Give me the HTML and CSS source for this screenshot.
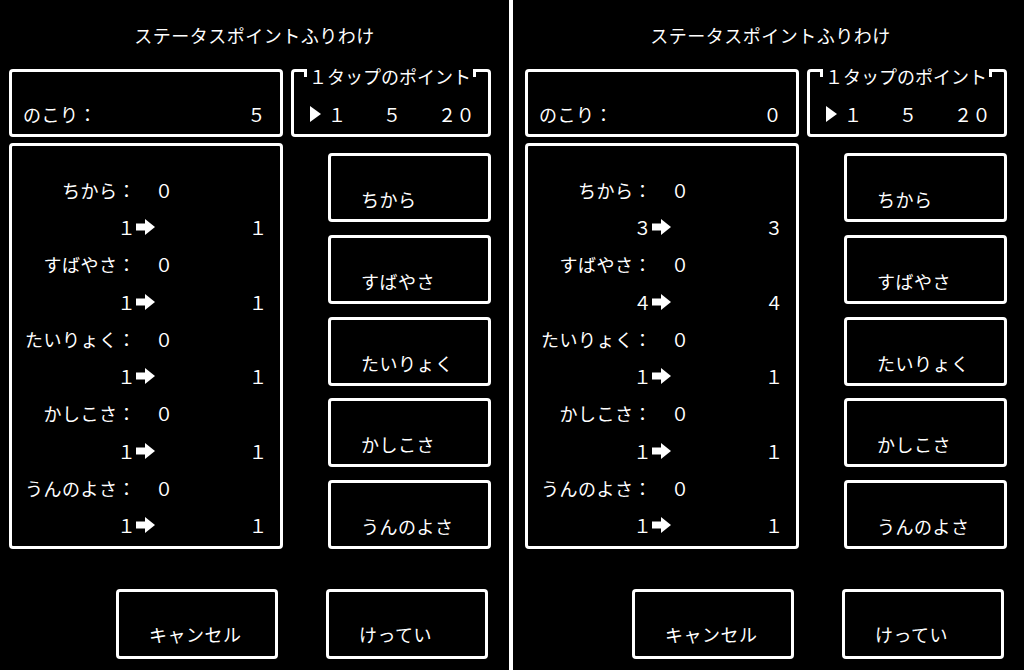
FILE: index.html
```html
<!DOCTYPE html>
<html lang="ja">
<head>
    <meta charset="UTF-8">
    <meta name="viewport" content="width=device-width, initial-scale=1.0">
    <title>ステータスポイントふりわけ</title>
    <link rel="stylesheet" href="styles.css">
</head>
<body>
    <div class="app">
        <!-- before allotting: 5 points left -->
        <section class="screen">
            <h1 class="title">ステータスポイントふりわけ</h1>
            <div class="top-row">
                <div class="box remain">
                    <span>のこり:</span>
                    <span>5</span>
                </div>
                <div class="box step">
                    <span class="legend">1タップのポイント</span>
                    <div class="step-option">
                        <span class="cursor-cell"><svg class="cursor" viewBox="0 0 12 16"><polygon points="0,0 11,8 0,16" fill="#fff"/></svg></span>
                        <span>1</span>
                    </div>
                    <div class="step-option">
                        <span class="cursor-cell"></span>
                        <span>5</span>
                    </div>
                    <div class="step-option">
                        <span class="cursor-cell"></span>
                        <span>20</span>
                    </div>
                </div>
            </div>
            <div class="main">
                <div class="box stats">
                    <div class="stat-row"><span class="stat-key">ちから:</span><span class="stat-base">0</span></div>
                    <div class="stat-row"><span class="stat-key">1</span><svg class="arrow" viewBox="0 0 20 16"><rect x="0" y="4.5" width="10" height="7" fill="#fff"/><polygon points="9,0 19,8 9,16" fill="#fff"/></svg><span class="stat-next">1</span></div>
                    <div class="stat-row"><span class="stat-key">すばやさ:</span><span class="stat-base">0</span></div>
                    <div class="stat-row"><span class="stat-key">1</span><svg class="arrow" viewBox="0 0 20 16"><rect x="0" y="4.5" width="10" height="7" fill="#fff"/><polygon points="9,0 19,8 9,16" fill="#fff"/></svg><span class="stat-next">1</span></div>
                    <div class="stat-row"><span class="stat-key">たいりょく:</span><span class="stat-base">0</span></div>
                    <div class="stat-row"><span class="stat-key">1</span><svg class="arrow" viewBox="0 0 20 16"><rect x="0" y="4.5" width="10" height="7" fill="#fff"/><polygon points="9,0 19,8 9,16" fill="#fff"/></svg><span class="stat-next">1</span></div>
                    <div class="stat-row"><span class="stat-key">かしこさ:</span><span class="stat-base">0</span></div>
                    <div class="stat-row"><span class="stat-key">1</span><svg class="arrow" viewBox="0 0 20 16"><rect x="0" y="4.5" width="10" height="7" fill="#fff"/><polygon points="9,0 19,8 9,16" fill="#fff"/></svg><span class="stat-next">1</span></div>
                    <div class="stat-row"><span class="stat-key">うんのよさ:</span><span class="stat-base">0</span></div>
                    <div class="stat-row"><span class="stat-key">1</span><svg class="arrow" viewBox="0 0 20 16"><rect x="0" y="4.5" width="10" height="7" fill="#fff"/><polygon points="9,0 19,8 9,16" fill="#fff"/></svg><span class="stat-next">1</span></div>
                </div>
                <div class="stat-buttons">
                    <div class="box btn">ちから</div>
                    <div class="box btn">すばやさ</div>
                    <div class="box btn">たいりょく</div>
                    <div class="box btn">かしこさ</div>
                    <div class="box btn">うんのよさ</div>
                </div>
            </div>
            <div class="actions">
                <div class="box btn action">キャンセル</div>
                <div class="box btn action">けってい</div>
            </div>
        </section>

        <div class="divider"></div>

        <!-- after allotting: all points used -->
        <section class="screen">
            <h1 class="title">ステータスポイントふりわけ</h1>
            <div class="top-row">
                <div class="box remain">
                    <span>のこり:</span>
                    <span>0</span>
                </div>
                <div class="box step">
                    <span class="legend">1タップのポイント</span>
                    <div class="step-option">
                        <span class="cursor-cell"><svg class="cursor" viewBox="0 0 12 16"><polygon points="0,0 11,8 0,16" fill="#fff"/></svg></span>
                        <span>1</span>
                    </div>
                    <div class="step-option">
                        <span class="cursor-cell"></span>
                        <span>5</span>
                    </div>
                    <div class="step-option">
                        <span class="cursor-cell"></span>
                        <span>20</span>
                    </div>
                </div>
            </div>
            <div class="main">
                <div class="box stats">
                    <div class="stat-row"><span class="stat-key">ちから:</span><span class="stat-base">0</span></div>
                    <div class="stat-row"><span class="stat-key">3</span><svg class="arrow" viewBox="0 0 20 16"><rect x="0" y="4.5" width="10" height="7" fill="#fff"/><polygon points="9,0 19,8 9,16" fill="#fff"/></svg><span class="stat-next">3</span></div>
                    <div class="stat-row"><span class="stat-key">すばやさ:</span><span class="stat-base">0</span></div>
                    <div class="stat-row"><span class="stat-key">4</span><svg class="arrow" viewBox="0 0 20 16"><rect x="0" y="4.5" width="10" height="7" fill="#fff"/><polygon points="9,0 19,8 9,16" fill="#fff"/></svg><span class="stat-next">4</span></div>
                    <div class="stat-row"><span class="stat-key">たいりょく:</span><span class="stat-base">0</span></div>
                    <div class="stat-row"><span class="stat-key">1</span><svg class="arrow" viewBox="0 0 20 16"><rect x="0" y="4.5" width="10" height="7" fill="#fff"/><polygon points="9,0 19,8 9,16" fill="#fff"/></svg><span class="stat-next">1</span></div>
                    <div class="stat-row"><span class="stat-key">かしこさ:</span><span class="stat-base">0</span></div>
                    <div class="stat-row"><span class="stat-key">1</span><svg class="arrow" viewBox="0 0 20 16"><rect x="0" y="4.5" width="10" height="7" fill="#fff"/><polygon points="9,0 19,8 9,16" fill="#fff"/></svg><span class="stat-next">1</span></div>
                    <div class="stat-row"><span class="stat-key">うんのよさ:</span><span class="stat-base">0</span></div>
                    <div class="stat-row"><span class="stat-key">1</span><svg class="arrow" viewBox="0 0 20 16"><rect x="0" y="4.5" width="10" height="7" fill="#fff"/><polygon points="9,0 19,8 9,16" fill="#fff"/></svg><span class="stat-next">1</span></div>
                </div>
                <div class="stat-buttons">
                    <div class="box btn">ちから</div>
                    <div class="box btn">すばやさ</div>
                    <div class="box btn">たいりょく</div>
                    <div class="box btn">かしこさ</div>
                    <div class="box btn">うんのよさ</div>
                </div>
            </div>
            <div class="actions">
                <div class="box btn action">キャンセル</div>
                <div class="box btn action">けってい</div>
            </div>
        </section>
    </div>
</body>
</html>
```

FILE: styles.css
```css
body {
    margin: 0;
    background-color: #000;
    color: #fff;
    font-family: "Noto Sans CJK JP", sans-serif;
    font-size: 18px;
    font-variant-east-asian: full-width;
    letter-spacing: 0.5px;
}
.app {
    display: flex;
    height: 670px;
    overflow: hidden;
}
.screen {
    width: 509px;
    flex: none;
}
.divider {
    width: 4px;
    margin-right: 3px;
    background-color: #fff;
    flex: none;
}
.title {
    margin: 0;
    height: 69px;
    font-size: 18px;
    font-weight: normal;
    line-height: 70px;
    text-align: center;
}

/* window frames */
.box {
    box-sizing: border-box;
    border: 3px solid #fff;
    border-radius: 4px;
}

.top-row {
    display: flex;
    gap: 8px;
    height: 68px;
    margin-left: 9px;
}
.remain {
    width: 274px;
    display: flex;
    justify-content: space-between;
    align-items: flex-end;
    padding: 0 14px 8px 11px;
    line-height: 24px;
}
.step {
    position: relative;
    width: 200px;
    display: flex;
    align-items: flex-end;
    padding: 0 0 8px 16px;
    line-height: 24px;
}
.legend {
    position: absolute;
    top: -5px;
    left: 10px;
    padding: 0 5px;
    background-color: #000;
    line-height: 18px;
    letter-spacing: 0;
}
.legend::before,
.legend::after {
    content: "";
    position: absolute;
    top: 2px;
    width: 3px;
    height: 8px;
    background-color: #fff;
}
.legend::before {
    left: 0;
}
.legend::after {
    right: 0;
}
.step-option {
    width: 55px;
    display: flex;
    align-items: center;
}
.cursor-cell {
    width: 18px;
    height: 16px;
}
.cursor {
    display: block;
    width: 12px;
    height: 16px;
}

.main {
    display: flex;
    margin: 6px 0 0 9px;
}
.stats {
    width: 274px;
    height: 406px;
    padding-top: 25px;
}
.stat-row {
    display: flex;
    align-items: center;
    height: 37.3px;
}
.stat-key {
    width: 124px;
    text-align: right;
}
.stat-base {
    width: 18px;
    margin-left: 19px;
    text-align: center;
}
.arrow {
    width: 20px;
    height: 16px;
    flex: none;
}
.stat-next {
    width: 18px;
    margin-left: 93px;
    text-align: center;
}

.stat-buttons {
    display: flex;
    flex-direction: column;
    gap: 12.75px;
    margin-left: 45px;
    padding-top: 10px;
}
.btn {
    width: 163px;
    height: 69px;
    padding: 31px 0 0 30px;
    line-height: 24px;
}

.actions {
    display: flex;
    gap: 48px;
    margin: 40px 0 0 116px;
}
.action {
    width: 162px;
    height: 70px;
    padding-top: 30px;
}
```
